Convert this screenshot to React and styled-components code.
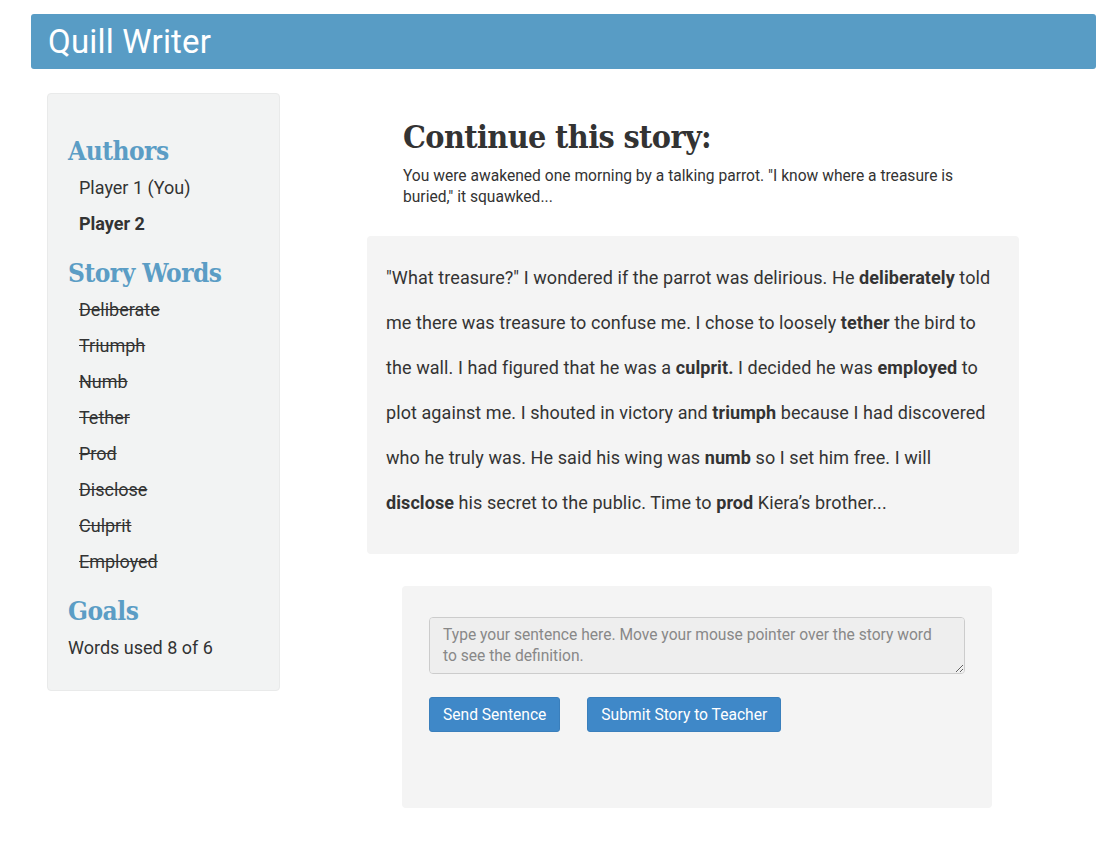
import styled, { createGlobalStyle } from "styled-components";

const GlobalStyle = createGlobalStyle`
  body {
    margin: 0;
    background: #fff;
    font-family: Roboto, "Liberation Sans", sans-serif;
    color: #333;
  }
  * { box-sizing: border-box; }
`;

const words = [
  "Deliberate",
  "Triumph",
  "Numb",
  "Tether",
  "Prod",
  "Disclose",
  "Culprit",
  "Employed",
];

const App = () => {
  return (
    <Page>
      <GlobalStyle />
      <Header>
        <Brand>Quill Writer</Brand>
      </Header>
      <Layout>
        <Sidebar>
          <SideTitle>Authors</SideTitle>
          <ItemList>
            <Item>Player 1 (You)</Item>
            <Item bold>Player 2</Item>
          </ItemList>
          <SideTitle>Story Words</SideTitle>
          <ItemList>
            {words.map((w) => (
              <Item key={w} struck>
                {w}
              </Item>
            ))}
          </ItemList>
          <SideTitle>Goals</SideTitle>
          <GoalText>Words used 8 of 6</GoalText>
        </Sidebar>
        <Main>
          <Prompt>
            <PromptTitle>Continue this story:</PromptTitle>
            <PromptText>
              You were awakened one morning by a talking parrot. "I know where a
              treasure is buried," it squawked...
            </PromptText>
          </Prompt>
          <StoryBox>
            <p>
              "What treasure?" I wondered if the parrot was delirious. He{" "}
              <b>deliberately</b> told me there was treasure to confuse me. I
              chose to loosely <b>tether</b> the bird to the wall. I had figured
              that he was a <b>culprit.</b> I decided he was <b>employed</b> to
              plot against me. I shouted in victory and <b>triumph</b> because I
              had discovered who he truly was. He said his wing was{" "}
              <b>numb</b> so I set him free. I will <b>disclose</b> his secret
              to the public. Time to <b>prod</b> Kiera’s brother...
            </p>
          </StoryBox>
          <FormBox>
            <Input placeholder="Type your sentence here. Move your mouse pointer over the story word to see the definition." />
            <Actions>
              <Button>Send Sentence</Button>
              <Button>Submit Story to Teacher</Button>
            </Actions>
          </FormBox>
        </Main>
      </Layout>
    </Page>
  );
};

const Page = styled.div`
  padding: 14px 23px 40px 31px;
`;

const Header = styled.header`
  background: #589cc5;
  height: 55px;
  border-radius: 3px;
  display: flex;
  align-items: center;
  padding-left: 17px;
`;

const Brand = styled.h1`
  margin: 0;
  color: #fff;
  font-weight: 400;
  font-size: 33px;
  line-height: 57px;
  letter-spacing: 0.2px;
`;

const Layout = styled.div`
  display: grid;
  grid-template-columns: 233px 652px;
  column-gap: 87px;
  padding: 24px 0 0 16px;
  align-items: start;
`;

const Sidebar = styled.aside`
  background: #f2f3f3;
  border: 1px solid #e9eaea;
  border-radius: 4px;
  padding: 38px 20px 24px 20px;
`;

const SideTitle = styled.h2`
  margin: 0;
  font-family: "DejaVu Serif", "Liberation Serif", serif;
  font-stretch: condensed;
  font-weight: 700;
  font-size: 26px;
  line-height: 38px;
  color: #5b9dc5;
  letter-spacing: -0.5px;
`;

const ItemList = styled.ul`
  list-style: none;
  margin: 0 0 12px 0;
  padding: 0 0 0 11px;
`;

const Item = styled.li`
  font-size: 18px;
  line-height: 36px;
  color: #333;
  font-weight: ${(p) => (p.bold ? 700 : 400)};
  text-decoration: ${(p) => (p.struck ? "line-through" : "none")};
`;

const GoalText = styled.p`
  margin: 0;
  font-size: 18px;
  line-height: 36px;
`;

const Main = styled.main`
  display: flex;
  flex-direction: column;
  padding-top: 22px;
`;

const Prompt = styled.div`
  padding: 0 40px 0 36px;
`;

const PromptTitle = styled.h2`
  margin: 0;
  font-family: "DejaVu Serif", "Liberation Serif", serif;
  font-stretch: condensed;
  font-weight: 700;
  font-size: 32px;
  line-height: 44px;
  color: #333;
  letter-spacing: -0.6px;
`;

const PromptText = styled.p`
  margin: 7px 0 0 0;
  font-size: 15.6px;
  line-height: 21px;
  width: 575px;
`;

const StoryBox = styled.div`
  margin-top: 28px;
  background: #f4f4f4;
  border-radius: 4px;
  padding: 19px 25px 20px 19px;
  p {
    margin: 0 0 9px 0;
    font-size: 18px;
    line-height: 45px;
    letter-spacing: 0.08px;
  }
`;

const FormBox = styled.div`
  margin: 32px 27px 0 35px;
  background: #f4f4f4;
  border-radius: 4px;
  height: 222px;
  padding: 31px 27px;
`;

const Input = styled.textarea`
  display: block;
  width: 100%;
  height: 57px;
  background: #eeeeee;
  border: 1px solid #ccc;
  border-radius: 4px;
  padding: 7px 24px 7px 13px;
  font-family: Roboto, "Liberation Sans", sans-serif;
  font-size: 15.6px;
  line-height: 21px;
  color: #555;
  resize: vertical;
  &::placeholder {
    color: #888;
  }
`;

const Actions = styled.div`
  display: flex;
  gap: 27px;
  margin-top: 23px;
`;

const Button = styled.button`
  background: #3f88c8;
  color: #fff;
  border: 1px solid #3a7fbc;
  border-radius: 3px;
  height: 35px;
  padding: 0 13px;
  font-family: Roboto, "Liberation Sans", sans-serif;
  font-size: 15.6px;
  cursor: pointer;
`;

export default App;
